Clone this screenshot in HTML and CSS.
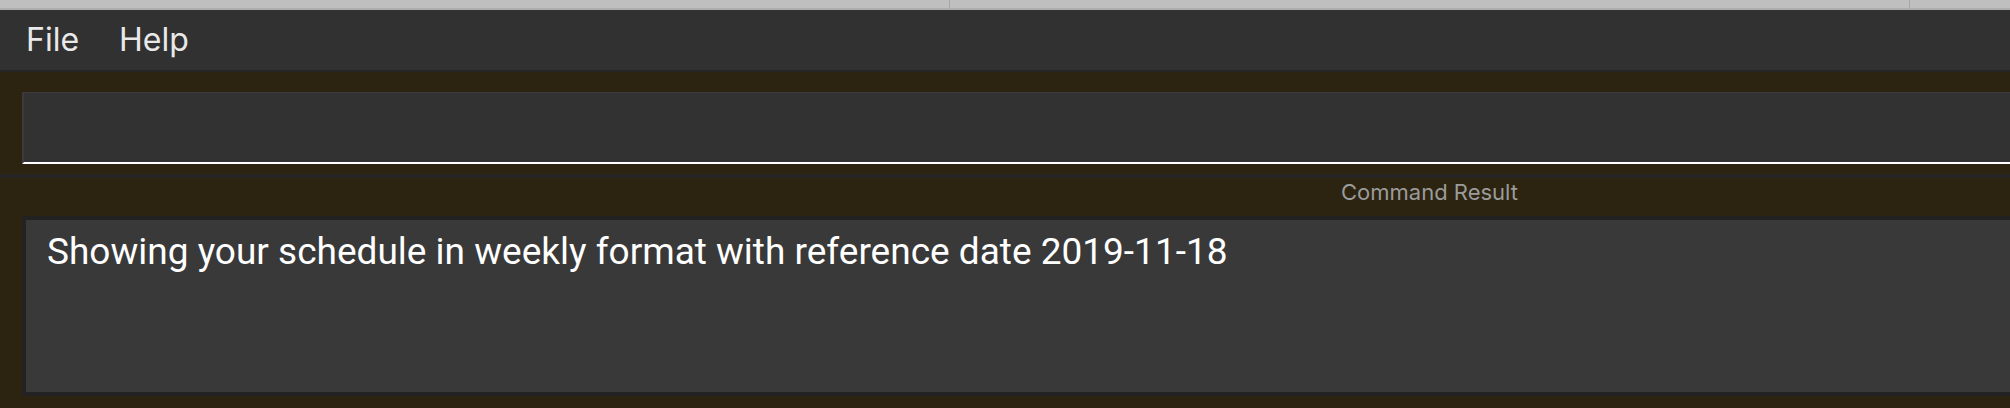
FILE: index.html
```html
<!DOCTYPE html>
<html>
<head>
<meta charset="utf-8">
<title>Schedule</title>
<link rel="stylesheet" href="styles.css">
</head>
<body>
<div class="tabstrip">
  <div class="tab tab-a"></div>
  <div class="tab tab-b"></div>
  <div class="tab tab-c"></div>
</div>
<div class="menubar">
  <span class="menu-item">File</span>
  <span class="menu-item">Help</span>
</div>
<div class="command-area">
  <div class="command-box"></div>
</div>
<div class="result-label">Command Result</div>
<div class="result-area">
  <div class="result-box">Showing your schedule in weekly format with reference date 2019-11-18</div>
</div>
</body>
</html>
```
FILE: styles.css
```css
html, body {
  margin: 0;
  padding: 0;
}
body {
  width: 2010px;
  height: 408px;
  overflow: hidden;
  background: #2c2410;
  font-family: "Roboto", "Liberation Sans", sans-serif;
}
.tabstrip {
  display: flex;
  height: 8px;
  background: #bfbfbf;
  border-bottom: 2px solid #adadad;
}
.tab {
  height: 8px;
}
.tab-a {
  width: 949px;
  border-right: 1px solid #a6a6a6;
}
.tab-b {
  width: 959px;
  border-right: 1px solid #a6a6a6;
}
.tab-c {
  flex: 1;
}
.menubar {
  display: flex;
  height: 60px;
  background: #313131;
  border-bottom: 2px solid #262626;
  padding-left: 6px;
}
.menu-item {
  font-family: "Inter", "Liberation Sans", sans-serif;
  font-size: 32px;
  line-height: 60px;
  color: #e9e9e9;
  padding: 0 20px;
}
.command-area {
  padding: 20px 0 10px 22px;
}
.command-box {
  height: 69px;
  background: #323232;
  border-left: 2px solid #3b3b3b;
  border-top: 1px solid #3b3b3b;
  border-bottom: 2px solid #ffffff;
}
.result-label {
  border-top: 4px solid #252525;
  height: 28px;
  padding: 0 0 10px 1341px;
  font-family: "Inter", "Liberation Sans", sans-serif;
  font-size: 22px;
  line-height: 28px;
  color: #9b9b9b;
}
.result-area {
  padding-left: 22px;
}
.result-box {
  height: 162px;
  background: #393939;
  border: 4px solid #222222;
  border-right: none;
  padding: 10px 0 0 21px;
  font-size: 37px;
  line-height: 43px;
  color: #ffffff;
  white-space: nowrap;
  overflow: hidden;
}
```
